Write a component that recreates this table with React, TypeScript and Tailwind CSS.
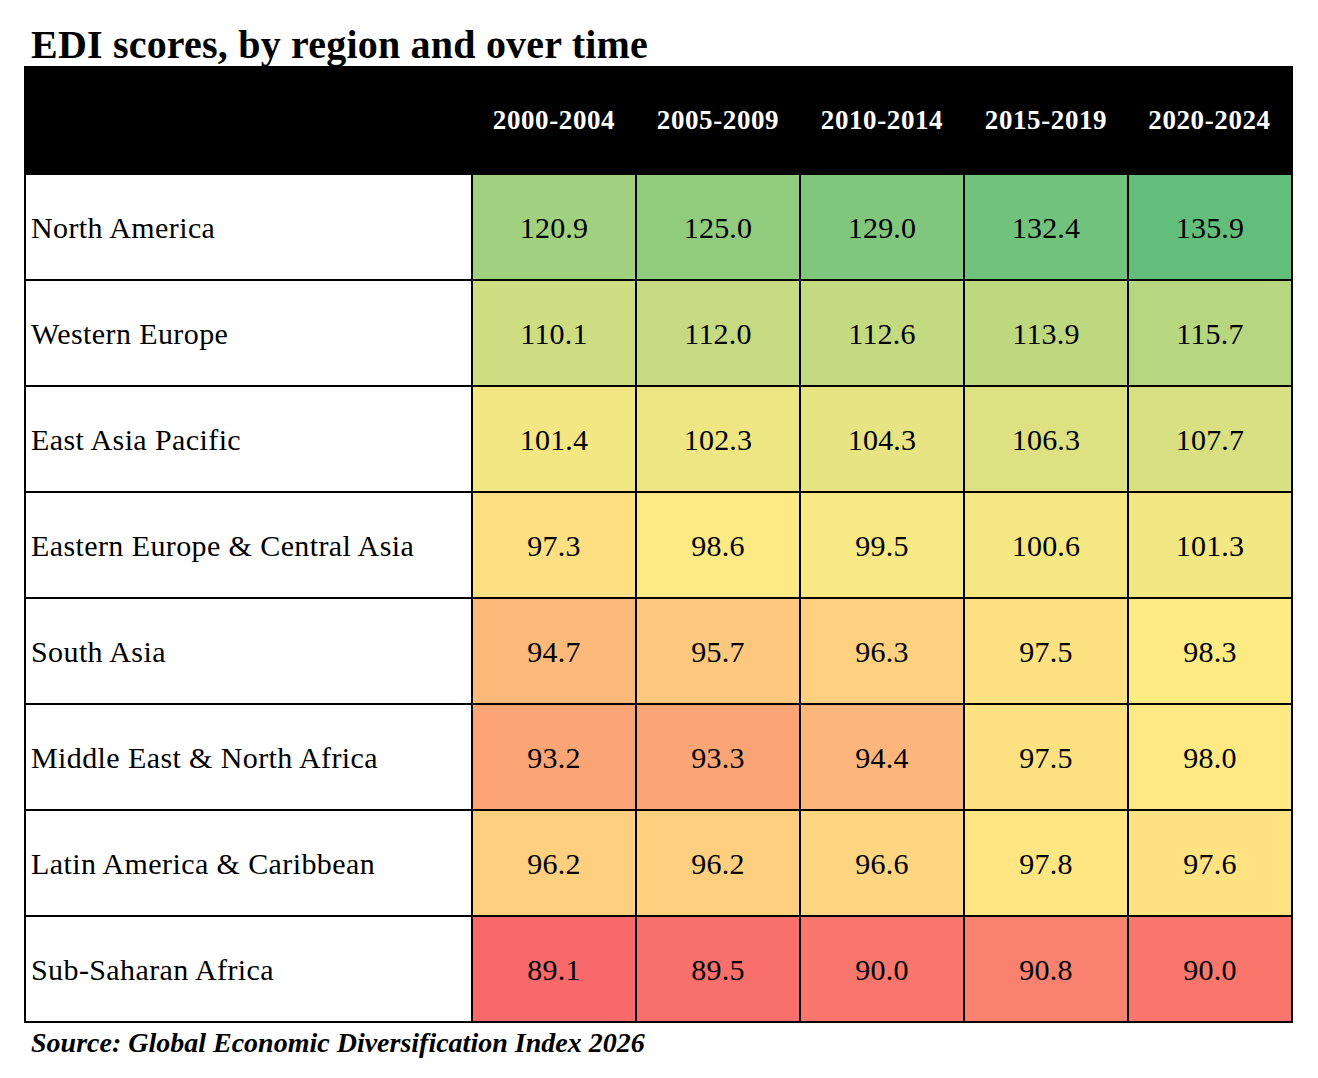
import React from "react";

interface Region {
  name: string;
  scores: number[];
}

const periods = ["2000-2004", "2005-2009", "2010-2014", "2015-2019", "2020-2024"];

const regions: Region[] = [
  { name: "North America", scores: [120.9, 125.0, 129.0, 132.4, 135.9] },
  { name: "Western Europe", scores: [110.1, 112.0, 112.6, 113.9, 115.7] },
  { name: "East Asia Pacific", scores: [101.4, 102.3, 104.3, 106.3, 107.7] },
  { name: "Eastern Europe & Central Asia", scores: [97.3, 98.6, 99.5, 100.6, 101.3] },
  { name: "South Asia", scores: [94.7, 95.7, 96.3, 97.5, 98.3] },
  { name: "Middle East & North Africa", scores: [93.2, 93.3, 94.4, 97.5, 98.0] },
  { name: "Latin America & Caribbean", scores: [96.2, 96.2, 96.6, 97.8, 97.6] },
  { name: "Sub-Saharan Africa", scores: [89.1, 89.5, 90.0, 90.8, 90.0] },
];

// 3-colour scale: red (min) -> yellow (median) -> green (max)
const all = regions.flatMap((r) => r.scores).sort((a, b) => a - b);
const min = all[0];
const max = all[all.length - 1];
const mid = (all[19] + all[20]) / 2;

const RED = [248, 105, 107];
const YELLOW = [255, 235, 132];
const GREEN = [99, 190, 123];

function scaleColor(v: number) {
  let to = GREEN;
  let t = 0;
  if (v >= mid) {
    t = (v - mid) / (max - mid);
  } else {
    to = RED;
    t = (mid - v) / (mid - min);
  }
  const c = YELLOW.map((f, i) => Math.round(f + (to[i] - f) * t));
  return `rgb(${c[0]}, ${c[1]}, ${c[2]})`;
}

export default function App() {
  return (
    <div
      className="min-h-screen bg-white pl-[24px] pr-[26px] text-black"
      style={{ fontFamily: '"Liberation Serif", "Times New Roman", serif' }}
    >
      <h1 className="pt-[24px] pl-[7px] text-[40px] font-bold leading-[42px] tracking-[0.2px]">
        EDI scores, by region and over time
      </h1>

      <table className="w-[1268px] table-fixed border-collapse border-2 border-black">
        <colgroup>
          <col className="w-[447px]" />
          {periods.map((p) => (
            <col key={p} className="w-[164px]" />
          ))}
        </colgroup>
        <thead>
          <tr className="h-[107px] bg-black text-white">
            <th />
            {periods.map((p) => (
              <th key={p} className="text-center text-[27px] font-bold tracking-[0.6px]">
                {p}
              </th>
            ))}
          </tr>
        </thead>
        <tbody>
          {regions.map((r) => (
            <tr key={r.name} className="h-[106px]">
              <td className="border-2 border-black pl-[5px] text-left text-[30px] tracking-[0.4px]">
                {r.name}
              </td>
              {r.scores.map((s, i) => (
                <td
                  key={i}
                  className="border-2 border-black text-center text-[30px] tracking-[0.2px]"
                  style={{ backgroundColor: scaleColor(s) }}
                >
                  {s.toFixed(1)}
                </td>
              ))}
            </tr>
          ))}
        </tbody>
      </table>

      <p className="pl-[7px] pt-[4px] text-[28px] font-bold italic leading-[32px]">
        Source: Global Economic Diversification Index 2026
      </p>
    </div>
  );
}
